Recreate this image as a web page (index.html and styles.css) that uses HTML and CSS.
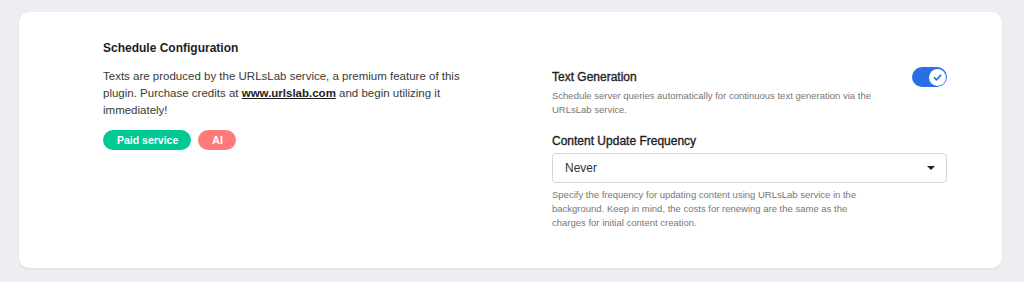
FILE: index.html
```html
<!DOCTYPE html>
<html lang="en">
<head>
  <meta charset="UTF-8">
  <meta name="viewport" content="width=device-width, initial-scale=1.0">
  <title>Schedule Configuration</title>
  <link rel="stylesheet" href="styles.css">
</head>
<body>
  <div class="card">
    <!-- Left: section intro -->
    <div class="intro">
      <h2>Schedule Configuration</h2>
      <p>Texts are produced by the URLsLab service, a premium feature of this plugin. Purchase credits at <a href="#">www.urlslab.com</a> and begin utilizing it immediately!</p>
      <div class="tags">
        <span class="tag tag-paid">Paid service</span>
        <span class="tag tag-ai">AI</span>
      </div>
    </div>

    <!-- Right: options -->
    <div class="options">
      <div class="option option-toggle">
        <div>
          <div class="label">Text Generation</div>
          <p class="help">Schedule server queries automatically for continuous text generation via the URLsLab service.</p>
        </div>
        <label class="switch">
          <input type="checkbox" checked>
          <span class="knob">
            <svg viewBox="0 0 12 12" width="11" height="11"><path d="M2.6 6.3 L5 8.5 L9.4 3.7" fill="none" stroke="#2a6fe6" stroke-width="1.8" stroke-linecap="round" stroke-linejoin="round"/></svg>
          </span>
        </label>
      </div>

      <div class="option">
        <div class="label">Content Update Frequency</div>
        <div class="select">
          <span>Never</span>
          <span class="caret"></span>
        </div>
        <p class="help help-below">Specify the frequency for updating content using URLsLab service in the background. Keep in mind, the costs for renewing are the same as the charges for initial content creation.</p>
      </div>
    </div>
  </div>
</body>
</html>
```

FILE: styles.css
```css
/* Global */
body {
  margin: 0;
  padding: 12px 22px 14px 19px;
  background: #eceef2;
  font-family: 'Liberation Sans', Arial, sans-serif;
  color: #333;
}

.card {
  display: grid;
  grid-template-columns: 370px 395px;
  column-gap: 79px;
  height: 256px;
  box-sizing: border-box;
  padding: 26px 55px 0 84px;
  background: #fff;
  border-radius: 10px;
  box-shadow: 0 1px 3px rgba(0, 0, 0, 0.08);
}

/* Intro column */
.intro h2 {
  margin: 0 0 10px;
  font-size: 12px;
  font-weight: bold;
  color: #1e1e1e;
  line-height: 20px;
}

.intro p {
  margin: 0;
  font-size: 11.5px;
  line-height: 17px;
  color: #3a3a3a;
}

.intro a {
  color: #1e1e1e;
  font-weight: bold;
  text-decoration: underline;
}

.tags {
  display: flex;
  gap: 7px;
  margin-top: 11px;
}

.tag {
  padding: 0 13px 0 14px;
  height: 20px;
  line-height: 20px;
  border-radius: 10px;
  font-size: 10.5px;
  font-weight: bold;
  color: #fff;
}

.tag-paid { background: #00c995; }
.tag-ai { background: #ff7b7b; }

/* Options column */
.options {
  padding-top: 30px;
}

.option-toggle {
  display: flex;
  justify-content: space-between;
  align-items: flex-start;
}

.label {
  font-size: 12px;
  color: #1e1e1e;
  line-height: 18px;
  -webkit-text-stroke: 0.35px #1e1e1e;
}

.help {
  margin: 3px 0 0;
  max-width: 330px;
  font-size: 9.5px;
  line-height: 14px;
  color: #777;
}

.help-below {
  margin-top: 5px;
}

.option + .option {
  margin-top: 15px;
}

/* Switch */
.switch {
  position: relative;
  display: block;
  width: 35px;
  height: 20px;
  margin-top: -1px;
  border-radius: 10px;
  background: #2a6fe6;
  cursor: pointer;
}

.switch input {
  display: none;
}

.knob {
  position: absolute;
  top: 1.5px;
  right: 1.5px;
  width: 17px;
  height: 17px;
  border-radius: 50%;
  background: #fff;
  display: flex;
  align-items: center;
  justify-content: center;
}

/* Select */
.select {
  display: flex;
  justify-content: space-between;
  align-items: center;
  height: 30px;
  box-sizing: border-box;
  margin-top: 3px;
  padding: 0 11px 0 12px;
  border: 1px solid #d4d6da;
  border-radius: 4px;
  font-size: 12px;
  color: #333;
}

.caret {
  width: 0;
  height: 0;
  border-left: 4px solid transparent;
  border-right: 4px solid transparent;
  border-top: 4px solid #222;
}
```
